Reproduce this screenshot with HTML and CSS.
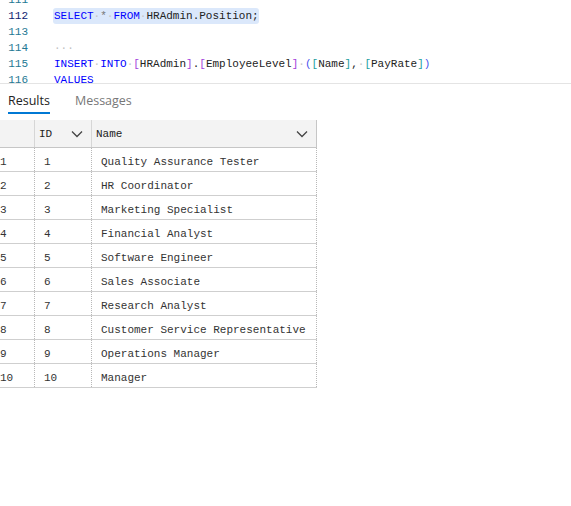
FILE: index.html
```html
<!DOCTYPE html>
<html>
<head>
<meta charset="utf-8">
<link rel="stylesheet" href="styles.css">
</head>
<body>
<div class="editor">
  <div class="lines">
    <div class="line"><span class="ln">111</span><span class="code"></span></div>
    <div class="line"><span class="ln active">112</span><span class="code"><span class="sel"><span class="kw">SELECT</span><span class="ws">·</span><span class="op">*</span><span class="ws">·</span><span class="kw">FROM</span><span class="ws">·</span><span class="id">HRAdmin.Position;</span></span></span></div>
    <div class="line"><span class="ln">113</span><span class="code"></span></div>
    <div class="line"><span class="ln">114</span><span class="code"><span class="fold">···</span></span></div>
    <div class="line"><span class="ln">115</span><span class="code"><span class="kw">INSERT</span><span class="ws">·</span><span class="kw">INTO</span><span class="ws">·</span><span class="b1">[</span><span class="id">HRAdmin</span><span class="b1">]</span><span class="id">.</span><span class="b1">[</span><span class="id">EmployeeLevel</span><span class="b1">]</span><span class="ws">·</span><span class="p1">(</span><span class="b2">[</span><span class="id">Name</span><span class="b2">]</span><span class="id">,</span><span class="ws">·</span><span class="b2">[</span><span class="id">PayRate</span><span class="b2">]</span><span class="p1">)</span></span></div>
    <div class="line"><span class="ln">116</span><span class="code"><span class="kw">VALUES</span></span></div>
  </div>
</div>
<div class="tabs">
  <div class="tab active">Results</div>
  <div class="tab">Messages</div>
</div>
<div class="grid">
  <div class="row head">
    <div class="c c0"></div>
    <div class="c c1">ID<svg class="chev" width="12" height="8" viewBox="0 0 12 8"><path d="M1 1.5 L6 6.5 L11 1.5" fill="none" stroke="#444" stroke-width="1.3"/></svg></div>
    <div class="c c2">Name<svg class="chev" width="12" height="8" viewBox="0 0 12 8"><path d="M1 1.5 L6 6.5 L11 1.5" fill="none" stroke="#444" stroke-width="1.3"/></svg></div>
  </div>
  <div class="row"><div class="c c0">1</div><div class="c c1">1</div><div class="c c2">Quality Assurance Tester</div></div>
  <div class="row"><div class="c c0">2</div><div class="c c1">2</div><div class="c c2">HR Coordinator</div></div>
  <div class="row"><div class="c c0">3</div><div class="c c1">3</div><div class="c c2">Marketing Specialist</div></div>
  <div class="row"><div class="c c0">4</div><div class="c c1">4</div><div class="c c2">Financial Analyst</div></div>
  <div class="row"><div class="c c0">5</div><div class="c c1">5</div><div class="c c2">Software Engineer</div></div>
  <div class="row"><div class="c c0">6</div><div class="c c1">6</div><div class="c c2">Sales Associate</div></div>
  <div class="row"><div class="c c0">7</div><div class="c c1">7</div><div class="c c2">Research Analyst</div></div>
  <div class="row"><div class="c c0">8</div><div class="c c1">8</div><div class="c c2">Customer Service Representative</div></div>
  <div class="row"><div class="c c0">9</div><div class="c c1">9</div><div class="c c2">Operations Manager</div></div>
  <div class="row"><div class="c c0">10</div><div class="c c1">10</div><div class="c c2">Manager</div></div>
</div>
</body>
</html>
```

FILE: styles.css
```css
* { box-sizing: border-box; }
html, body { margin: 0; padding: 0; background: #fff; }
body { width: 571px; height: 506px; overflow: hidden; font-family: "Liberation Mono", monospace; }

.editor {
  height: 84px;
  overflow: hidden;
  border-bottom: 1px solid #e4e4e4;
}
.lines { margin-top: -8px; }
.line {
  display: flex;
  height: 16px;
  line-height: 16px;
  font-size: 11px;
  white-space: pre;
}
.ln {
  width: 28px;
  text-align: right;
  color: #237893;
  flex: none;
}
.ln.active { color: #0b216f; }
.code { margin-left: 26px; color: #333; }
.sel { background: #dbe8fb; border-radius: 3px; margin-left: -1px; padding-left: 1px; display: inline-block; height: 16px; }
.kw { color: #0000ff; }
.op { color: #777; }
.id { color: #222; }
.ws { color: #c4c4c4; }
.fold { color: #c0c0c0; }
.b1 { color: #a33fdb; }
.b2 { color: #1c9e9e; }
.p1 { color: #4a55ee; }

.tabs {
  display: flex;
  gap: 25px;
  height: 36px;
  padding-left: 8px;
  font-family: "Open Sans", sans-serif;
  font-size: 12.5px;
}
.tab {
  color: #777;
  padding-top: 8px;
  height: 30px;
}
.tab.active {
  color: #222;
  border-bottom: 2px solid #0078d4;
}

.grid { width: 317px; font-size: 11px; color: #333; }
.row {
  display: flex;
  height: 24px;
  border-bottom: 1px solid #cfcfcf;
}
.row.head {
  height: 28px;
  background: #f3f3f3;
  border-bottom: 1px solid #c6c6c6;
  color: #222;
}
.c {
  display: flex;
  align-items: flex-start;
  padding-top: 7px;
  line-height: 14px;
  border-right: 1px dotted #b8b8b8;
  white-space: pre;
}
.head .c { border-right: 1px solid #d6d6d6; align-items: center; padding-top: 0; }
.head .c2 { border-right-color: #c6c6c6; }
.c0 { width: 35px; padding-left: 0; }
.c1 { width: 57px; padding-left: 9px; }
.c2 { width: 225px; padding-left: 9px; }
.head .c1, .head .c2 { padding-left: 4px; }
.chev { margin-left: auto; margin-right: 8px; }
```
